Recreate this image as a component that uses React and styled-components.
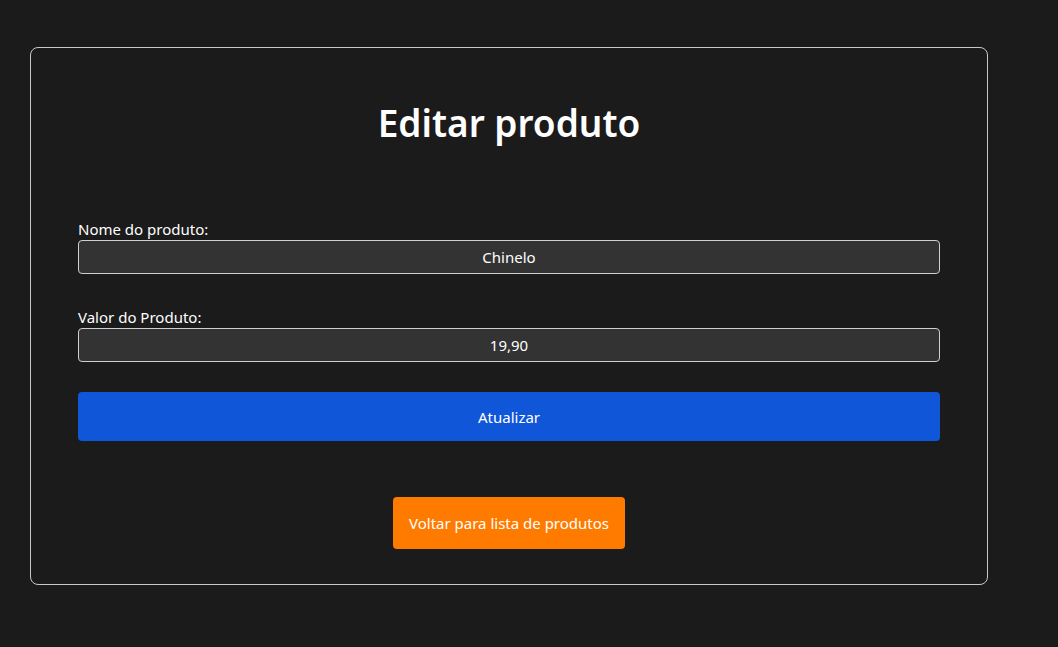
import * as React from 'react';
import styled, { createGlobalStyle } from 'styled-components';

const GlobalStyle = createGlobalStyle`
  body {
    margin: 0;
    background: #1b1b1b;
    font-family: "Noto Sans", "Open Sans", sans-serif;
    color: #fff;
  }
`;

const Page = styled.div`
  padding: 47px 70px 62px 30px;
`;

const Card = styled.div`
  border: 1px solid #c8c8c8;
  border-radius: 8px;
  padding: 52px 47px 35px;
  display: flex;
  flex-direction: column;
`;

const Title = styled.h1`
  margin: 0 0 73px;
  text-align: center;
  font-size: 37px;
  font-weight: 600;
  line-height: 46px;
`;

const Form = styled.form`
  display: flex;
  flex-direction: column;
`;

const Field = styled.div`
  display: flex;
  flex-direction: column;
  margin-bottom: ${(p) => p.gap}px;
`;

const Label = styled.label`
  font-size: 15px;
  line-height: 20px;
  margin-bottom: 1px;
`;

const Input = styled.input`
  box-sizing: border-box;
  height: 34px;
  background: #333333;
  border: 1px solid #cfcfcf;
  border-radius: 4px;
  color: #fff;
  font-family: inherit;
  font-size: 15px;
  text-align: center;
  outline: none;
`;

const Button = styled.button`
  border: none;
  border-radius: 4px;
  color: #fff;
  font-family: inherit;
  font-size: 15px;
  cursor: pointer;
`;

const UpdateButton = styled(Button)`
  height: 49px;
  background: #0f56d9;
`;

const BackButton = styled(Button)`
  align-self: center;
  margin-top: 56px;
  height: 52px;
  padding: 0 16px;
  background: #ff7b00;
`;

export default function App() {
  return (
    <Page>
      <GlobalStyle />
      <Card>
        <Title>Editar produto</Title>
        <Form onSubmit={(e) => e.preventDefault()}>
          <Field gap={33}>
            <Label>Nome do produto:</Label>
            <Input defaultValue="Chinelo" />
          </Field>
          <Field gap={30}>
            <Label>Valor do Produto:</Label>
            <Input defaultValue="19,90" />
          </Field>
          <UpdateButton>Atualizar</UpdateButton>
        </Form>
        <BackButton>Voltar para lista de produtos</BackButton>
      </Card>
    </Page>
  );
}
